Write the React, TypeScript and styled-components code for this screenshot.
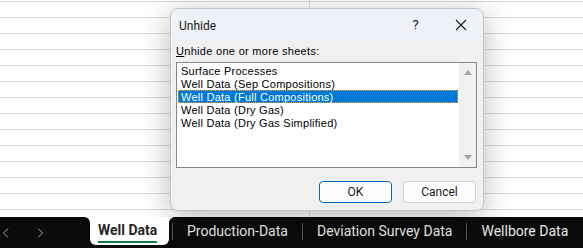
import styled, { createGlobalStyle } from "styled-components";

const GlobalStyle = createGlobalStyle`
  html, body {
    margin: 0;
    padding: 0;
    overflow: hidden;
    background: #fff;
  }
`;

const UI_FONT = `"Segoe UI", Roboto, "Liberation Sans", sans-serif`;
const CLASSIC_FONT = `Tahoma, "Liberation Sans", sans-serif`;

const sheets = [
  "Surface Processes",
  "Well Data (Sep Compositions)",
  "Well Data (Full Compositions)",
  "Well Data (Dry Gas)",
  "Well Data (Dry Gas Simplified)",
];

const tabs = ["Production-Data", "Deviation Survey Data", "Wellbore Data"];

export default function App() {
  return (
    <Page>
      <GlobalStyle />
      <Sheet>
        <UnhideDialog />
      </Sheet>
      <TabBar />
    </Page>
  );
}

const Page = styled.div`
  width: 583px;
  height: 248px;
  display: flex;
  flex-direction: column;
  overflow: hidden;
`;

const Sheet = styled.div`
  position: relative;
  height: 217px;
  background-color: #fff;
  background-image: linear-gradient(
      to right,
      transparent 309px,
      #dadada 309px,
      #dadada 310px,
      transparent 310px
    ),
    linear-gradient(to bottom, #dadada 1px, transparent 1px);
  background-size: 100% 100%, 100% 16px;
  background-position: 0 0, 0 1px;
`;

function UnhideDialog() {
  return (
    <Dialog>
      <TitleBar>
        <Title>Unhide</Title>
        <TitleButton>?</TitleButton>
        <TitleButton>
          <svg width="12" height="12" viewBox="0 0 12 12">
            <path d="M1 1L11 11M11 1L1 11" stroke="#1a1a1a" strokeWidth="1.1" />
          </svg>
        </TitleButton>
      </TitleBar>
      <Body>
        <Label>
          <u>U</u>nhide one or more sheets:
        </Label>
        <ListBox>
          <Items>
            {sheets.map((s, i) => (
              <Item key={s} selected={i === 2}>
                {s}
              </Item>
            ))}
          </Items>
          <ScrollBar>
            <Arrow direction="up" />
            <Arrow direction="down" />
          </ScrollBar>
        </ListBox>
        <Footer>
          <Button primary>OK</Button>
          <Button>Cancel</Button>
        </Footer>
      </Body>
    </Dialog>
  );
}

const Dialog = styled.div`
  position: absolute;
  left: 170px;
  top: 8px;
  width: 314px;
  height: 203px;
  box-sizing: border-box;
  border: 1px solid #c4c4c4;
  border-radius: 8px;
  background: #f0f0f0;
  box-shadow: 0 6px 30px rgba(0, 0, 0, 0.28);
  display: flex;
  flex-direction: column;
  overflow: hidden;
`;

const TitleBar = styled.div`
  height: 31px;
  display: flex;
  align-items: center;
  background: #eef2f8;
  padding-left: 8px;
`;

const Title = styled.div`
  flex: 1;
  font-family: ${UI_FONT};
  font-size: 12px;
  color: #1a1a1a;
  padding-top: 2px;
`;

const TitleButton = styled.div`
  width: 45px;
  height: 30px;
  display: flex;
  align-items: center;
  justify-content: center;
  font-family: ${UI_FONT};
  font-size: 13px;
  color: #1a1a1a;
`;

const Body = styled.div`
  flex: 1;
  display: flex;
  flex-direction: column;
  padding: 5px 7px 7px 5px;
`;

const Label = styled.div`
  font-family: ${CLASSIC_FONT};
  font-size: 11px;
  letter-spacing: 0.3px;
  color: #000;
  height: 13px;
  line-height: 13px;
  margin-bottom: 4px;
`;

const ListBox = styled.div`
  height: 106px;
  box-sizing: border-box;
  margin-right: -1px;
  border: 1px solid #828790;
  background: #fff;
  display: flex;
`;

const Items = styled.div`
  flex: 1;
  padding: 1px;
`;

const Item = styled.div<{ selected?: boolean }>`
  height: 13px;
  line-height: 12px;
  box-sizing: border-box;
  padding-left: 2px;
  font-family: ${CLASSIC_FONT};
  font-size: 11px;
  letter-spacing: 0.25px;
  white-space: nowrap;
  color: ${(p) => (p.selected ? "#fff" : "#000")};
  background: ${(p) => (p.selected ? "#0078d7" : "transparent")};
  border: 1px dotted ${(p) => (p.selected ? "#ff9c28" : "transparent")};
`;

const ScrollBar = styled.div`
  width: 17px;
  background: #f0f0f0;
  display: flex;
  flex-direction: column;
  justify-content: space-between;
  align-items: center;
  padding: 7px 0;
`;

const Arrow = styled.div<{ direction: "up" | "down" }>`
  width: 0;
  height: 0;
  border-left: 4px solid transparent;
  border-right: 4px solid transparent;
  ${(p) =>
    p.direction === "up"
      ? "border-bottom: 5px solid #a3a3a3;"
      : "border-top: 5px solid #a3a3a3;"}
`;

const Footer = styled.div`
  margin-top: auto;
  display: flex;
  justify-content: flex-end;
  gap: 11px;
`;

const Button = styled.div<{ primary?: boolean }>`
  width: 73px;
  height: 22px;
  box-sizing: border-box;
  border-radius: 4px;
  border: 1px solid ${(p) => (p.primary ? "#0067c0" : "#d0d0d0")};
  background: #fdfdfd;
  display: flex;
  align-items: center;
  justify-content: center;
  font-family: ${UI_FONT};
  font-size: 12px;
  color: #1a1a1a;
`;

function TabBar() {
  return (
    <Bar>
      <NavArrow>
        <svg width="8" height="12" viewBox="0 0 8 12">
          <path d="M6 1.5L1.5 6L6 10.5" fill="none" stroke="#a8a8a8" strokeWidth="1" />
        </svg>
      </NavArrow>
      <NavArrow>
        <svg width="8" height="12" viewBox="0 0 8 12">
          <path d="M2 1.5L6.5 6L2 10.5" fill="none" stroke="#a8a8a8" strokeWidth="1" />
        </svg>
      </NavArrow>
      <ActiveTab>
        <ActiveLabel>Well Data</ActiveLabel>
      </ActiveTab>
      {tabs.map((t) => (
        <TabGroup key={t}>
          <Divider />
          <Tab>{t}</Tab>
        </TabGroup>
      ))}
    </Bar>
  );
}

const Bar = styled.div`
  height: 31px;
  background: #0b0b0b;
  display: flex;
  align-items: stretch;
  padding-left: 1px;
`;

const NavArrow = styled.div`
  width: 33px;
  display: flex;
  align-items: center;
  justify-content: flex-start;
  padding-left: 1px;
  &:nth-child(2) {
    width: 54px;
  }
`;

const ActiveTab = styled.div`
  position: relative;
  width: 79px;
  margin-right: 3px;
  margin-bottom: 3px;
  background: #fff;
  border-radius: 0 0 6px 6px;
  display: flex;
  align-items: center;
  padding-left: 8px;
  box-sizing: border-box;

  &::before,
  &::after {
    content: "";
    position: absolute;
    top: 0;
    width: 6px;
    height: 6px;
  }
  &::before {
    left: -6px;
    background: radial-gradient(circle at 0 100%, #0b0b0b 5.5px, #fff 6.5px);
  }
  &::after {
    right: -6px;
    background: radial-gradient(circle at 100% 100%, #0b0b0b 5.5px, #fff 6.5px);
  }
`;

const ActiveLabel = styled.div`
  font-family: ${UI_FONT};
  font-size: 14px;
  font-weight: 700;
  color: #262626;
  padding-bottom: 3px;
  border-bottom: 2px solid #107c41;
  margin-top: 2px;
`;

const TabGroup = styled.div`
  display: flex;
  align-items: center;
  padding-bottom: 3px;
`;

const Divider = styled.div`
  width: 1px;
  height: 17px;
  background: #5a5a5a;
`;

const Tab = styled.div`
  font-family: ${UI_FONT};
  font-size: 14px;
  color: #e8e8e8;
  padding: 0 14px;
  white-space: nowrap;
`;
